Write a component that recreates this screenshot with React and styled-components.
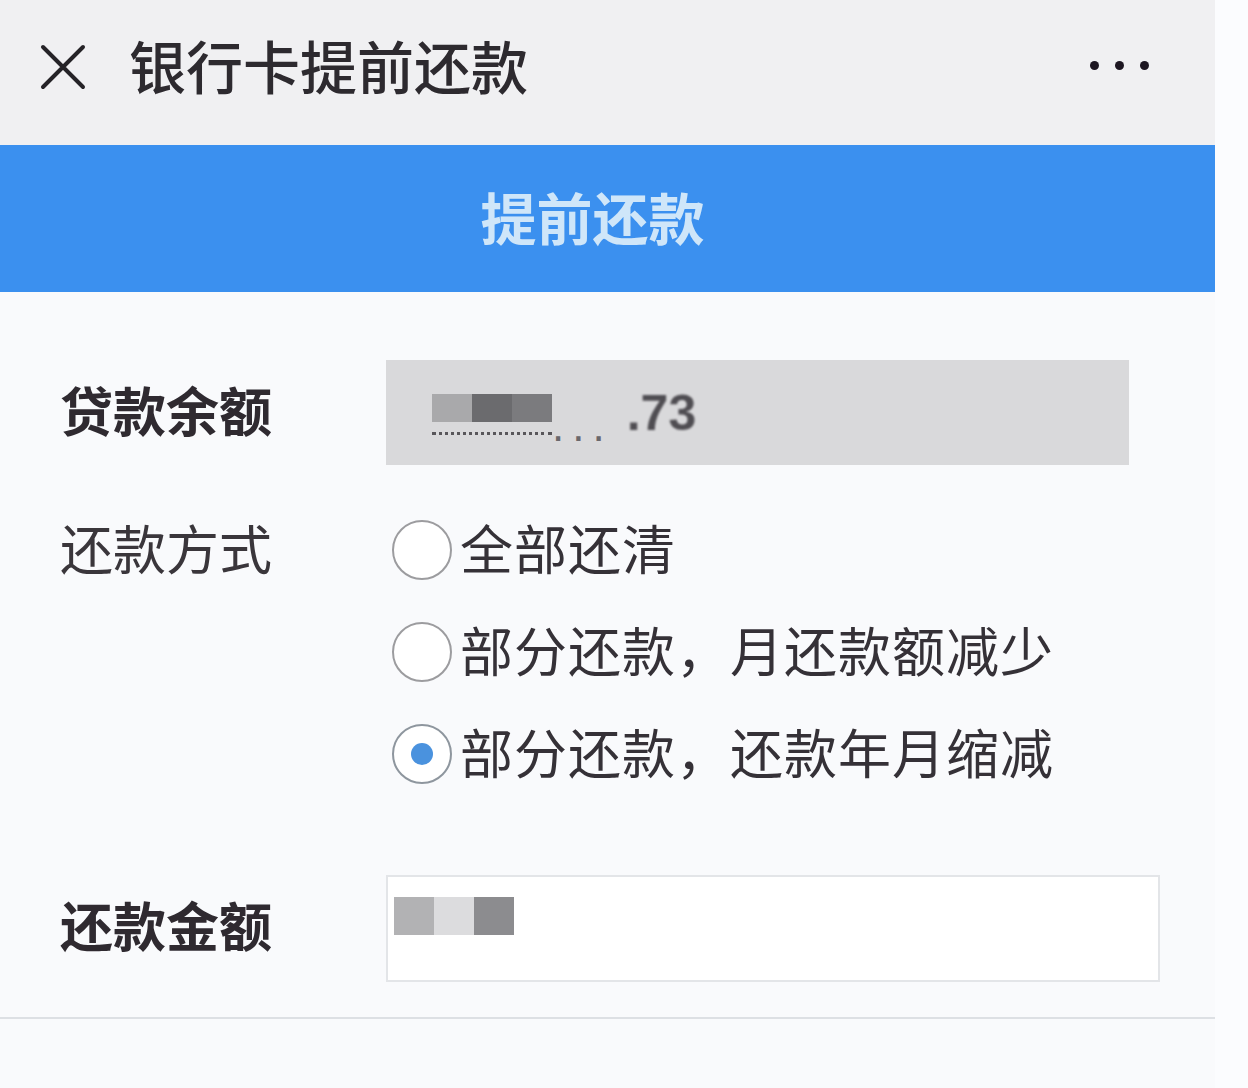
import styled, { createGlobalStyle } from "styled-components"

const GlobalStyle = createGlobalStyle`
  html, body {
    margin: 0;
    padding: 0;
    background: #fbfcfe;
  }
  body {
    font-family: "Noto Sans CJK SC", "Noto Sans", sans-serif;
  }
`

const options = [
  { label: '全部还清', checked: false },
  { label: '部分还款，月还款额减少', checked: false },
  { label: '部分还款，还款年月缩减', checked: true },
]

const balanceBlocks = ['#a9a9ab', '#6b6b6e', '#7b7b7e']
const amountBlocks = ['#b2b2b4', '#dcdcde', '#8c8c8f']

const App = () => {
  return (
    <>
      <GlobalStyle />
      <Page>
        <TopBar>
          <CloseIcon viewBox="0 0 46 46">
            <path d="M3 3 L43 43 M43 3 L3 43" stroke="#252327" strokeWidth="4" strokeLinecap="round" />
          </CloseIcon>
          <TopTitle>银行卡提前还款</TopTitle>
          <MoreDots>
            <Dot />
            <Dot />
            <Dot />
          </MoreDots>
        </TopBar>
        <Banner>提前还款</Banner>
        <Body>
          <FormRow top={68}>
            <Label bold>贷款余额</Label>
            <ReadonlyBox>
              <Mosaic>
                {balanceBlocks.map((c, i) => (
                  <Block key={i} color={c} />
                ))}
              </Mosaic>
              <FaintDigits>...</FaintDigits>
              <BlurDigits>.73</BlurDigits>
            </ReadonlyBox>
          </FormRow>
          <FormRow top={34}>
            <Label>还款方式</Label>
            <RadioGroup>
              {options.map((opt) => (
                <RadioRow key={opt.label}>
                  <RadioCircle checked={opt.checked}>
                    {opt.checked && <RadioDot />}
                  </RadioCircle>
                  <RadioText>{opt.label}</RadioText>
                </RadioRow>
              ))}
            </RadioGroup>
          </FormRow>
          <FormRow top={70}>
            <Label bold>还款金额</Label>
            <InputBox>
              {amountBlocks.map((c, i) => (
                <Block key={i} color={c} small />
              ))}
            </InputBox>
          </FormRow>
          <Divider />
        </Body>
      </Page>
    </>
  )
}

const Page = styled.div`
  width: 1215px;
  min-height: 1088px;
  background: #f9fafc;
  display: flex;
  flex-direction: column;
`

const TopBar = styled.div`
  height: 145px;
  background: #f0f0f2;
  display: flex;
  align-items: center;
  padding: 0 66px 0 40px;
  box-sizing: border-box;
`

const CloseIcon = styled.svg`
  width: 46px;
  height: 46px;
  flex-shrink: 0;
  margin-bottom: 12px;
`

const TopTitle = styled.div`
  margin-left: 43px;
  font-size: 57px;
  font-weight: 500;
  line-height: 1;
  color: #2d2a2f;
  flex: 1;
  margin-bottom: 16px;
`

const MoreDots = styled.div`
  display: flex;
  gap: 16px;
  margin-bottom: 14px;
`

const Dot = styled.span`
  width: 9px;
  height: 9px;
  border-radius: 50%;
  background: #1d1722;
`

const Banner = styled.div`
  height: 147px;
  background: #3b90ef;
  display: flex;
  align-items: center;
  justify-content: center;
  font-size: 56px;
  font-weight: 700;
  color: #cfe6f9;
  padding-right: 30px;
  padding-bottom: 6px;
  box-sizing: border-box;
`

const Body = styled.div`
  display: flex;
  flex-direction: column;
`

const FormRow = styled.div`
  display: grid;
  grid-template-columns: 326px 1fr;
  align-items: start;
  padding-left: 60px;
  margin-top: ${(p) => p.top}px;
`

const Label = styled.div`
  font-size: 53px;
  font-weight: ${(p) => (p.bold ? 700 : 400)};
  color: ${(p) => (p.bold ? '#2f2a30' : '#3a363b')};
  height: ${(p) => (p.bold ? '105px' : '102px')};
  display: flex;
  align-items: center;
  white-space: nowrap;
  line-height: 1;
  padding-bottom: 6px;
  box-sizing: border-box;
`

const ReadonlyBox = styled.div`
  width: 743px;
  height: 105px;
  background: #d9d9db;
  display: flex;
  align-items: center;
  padding-left: 46px;
  box-sizing: border-box;
`

const Mosaic = styled.span`
  display: flex;
  border-bottom: 3px dotted #58565a;
  padding-bottom: 10px;
  margin-top: 4px;
`

const FaintDigits = styled.span`
  font-size: 44px;
  color: #6a686c;
  letter-spacing: 8px;
  margin-top: 26px;
  line-height: 1;
  font-family: "Liberation Sans", "Noto Sans", sans-serif;
`

const BlurDigits = styled.span`
  font-size: 50px;
  font-weight: 700;
  color: #4f4d52;
  margin-left: 14px;
  font-family: "Liberation Sans", "Noto Sans", sans-serif;
  filter: blur(1px);
`

const Block = styled.span`
  width: 40px;
  height: ${(p) => (p.small ? '38px' : '28px')};
  background: ${(p) => p.color};
`

const RadioGroup = styled.div`
  display: flex;
  flex-direction: column;
`

const RadioRow = styled.div`
  height: 102px;
  display: flex;
  align-items: center;
  padding-left: 6px;
`

const RadioCircle = styled.span`
  width: 60px;
  height: 60px;
  border-radius: 50%;
  border: 2px solid ${(p) => (p.checked ? '#8e969e' : '#9c9c9f')};
  background: #ffffff;
  box-sizing: border-box;
  display: flex;
  align-items: center;
  justify-content: center;
  flex-shrink: 0;
`

const RadioDot = styled.span`
  width: 22px;
  height: 22px;
  border-radius: 50%;
  background: #4a92de;
`

const RadioText = styled.span`
  margin-left: 8px;
  font-size: 53px;
  letter-spacing: 1px;
  line-height: 1;
  padding-bottom: 6px;
  color: #353137;
  white-space: nowrap;
`

const InputBox = styled.div`
  width: 774px;
  height: 107px;
  background: #ffffff;
  border: 2px solid #e3e5e8;
  box-sizing: border-box;
  display: flex;
  align-items: flex-start;
  padding: 20px 0 0 6px;
`

const Divider = styled.div`
  height: 2px;
  background: #dde0e4;
  margin-top: 35px;
`

export default App
